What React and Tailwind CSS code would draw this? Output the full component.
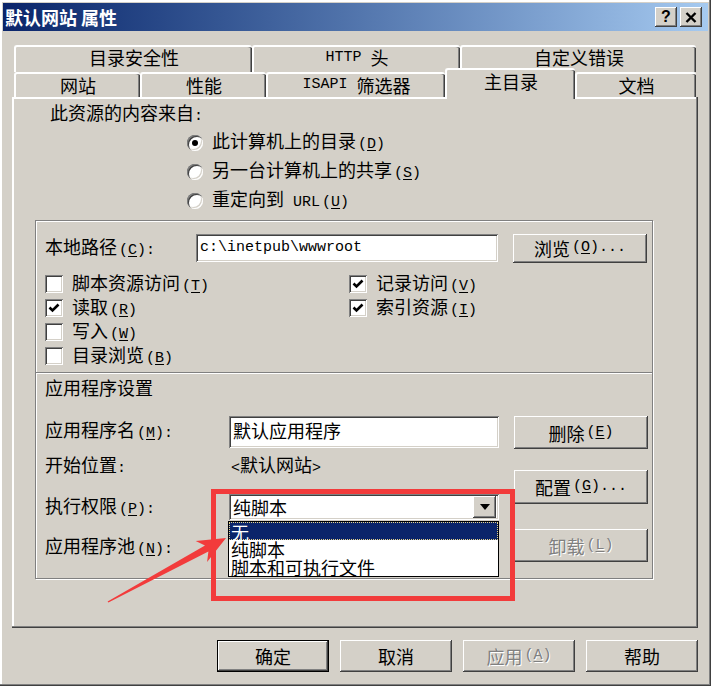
import React from 'react';

const raised = 'shadow-[inset_-1px_-1px_#404040,inset_1px_1px_#ffffff,inset_-2px_-2px_#808080,inset_2px_2px_#d4d0c8]';
const sunken = 'shadow-[inset_1px_1px_#808080,inset_-1px_-1px_#ffffff,inset_2px_2px_#404040,inset_-2px_-2px_#d4d0c8]';

const Mono = ({ children }) => (
    <span className="font-['Liberation_Mono',monospace] text-[15px]">{children}</span>
);

// mnemonic like (D), underlined letter
const Key = ({ k, after = '' }) => (
    <span className="ml-[2px] font-['Liberation_Mono',monospace] text-[15px]">
        (<span className="underline underline-offset-2">{k}</span>){after}
    </span>
);

const Button = ({ children, className = '', disabled = false, isDefault = false }) => (
    <div className={`bg-[#d4d0c8] ${isDefault ? 'border border-black' : ''} ${className}`}>
        <div className={`flex h-full w-full items-center justify-center ${raised} ${disabled ? 'text-[#808080] [text-shadow:1px_1px_#ffffff]' : ''}`}>
            {children}
        </div>
    </div>
);

const Check = ({ checked, children }) => (
    <div className="flex h-[24px] items-center">
        <div className={`h-[18px] w-[18px] bg-white ${sunken}`}>
            {checked && (
                <svg width="18" height="18" viewBox="0 0 18 18">
                    <path d="M4.5 8.5 L7.5 11.5 L13.5 5.5" fill="none" stroke="#000" strokeWidth="2.6" />
                </svg>
            )}
        </div>
        <span className="ml-[9px]">{children}</span>
    </div>
);

const Radio = ({ checked, children }) => (
    <div className="flex h-[29px] items-center">
        <div className="flex h-[16px] w-[16px] items-center justify-center rounded-full bg-white shadow-[inset_1px_1px_#808080,inset_2px_2px_#404040,inset_-1px_-1px_#ffffff,inset_-2px_-2px_#d4d0c8]">
            {checked && <div className="h-[6px] w-[6px] rounded-full bg-black" />}
        </div>
        <span className="ml-[9px]">{children}</span>
    </div>
);

const Tab = ({ children, className = '' }) => (
    <div className={`flex justify-center rounded-t-[3px] border-l-2 border-t-2 border-white bg-[#d4d0c8] shadow-[inset_-1px_0_#404040,inset_-2px_0_#808080] ${className}`}>
        {children}
    </div>
);

export default function App() {
    return (
        <div className="relative h-[686px] w-[711px] overflow-hidden bg-[#d4d0c8] p-[3px] font-['Noto_Sans_CJK_SC',sans-serif] text-[18px] leading-[22px] text-black shadow-[inset_-1px_-1px_#404040,inset_-2px_-2px_#808080,inset_2px_2px_#ffffff]">
            {/* title bar */}
            <div className="flex h-[28px] items-center bg-linear-to-r from-[#0a246a] to-[#a6caf0] pl-[2px] pr-[6px]">
                <span className="flex-1 text-[18px] font-bold text-white">默认网站 属性</span>
                <div className="flex gap-[3px]">
                    <div className={`flex h-[20px] w-[22px] items-center justify-center bg-[#d4d0c8] font-['Liberation_Sans',sans-serif] text-[16px] font-bold ${raised}`}>?</div>
                    <div className={`flex h-[20px] w-[22px] items-center justify-center bg-[#d4d0c8] ${raised}`}>
                        <svg width="12" height="11" viewBox="0 0 12 11">
                            <path d="M1.5 1 L10.5 10 M10.5 1 L1.5 10" stroke="#000" strokeWidth="2.4" />
                        </svg>
                    </div>
                </div>
            </div>

            <div className="pl-[9px] pr-[10px] pt-[14px]">
                {/* back row of tabs */}
                <div className="ml-[2px] flex h-[27px]">
                    <Tab className="w-[238px] leading-[21px]">目录安全性</Tab>
                    <Tab className="w-[208px] leading-[21px]"><Mono>HTTP&nbsp;</Mono>头</Tab>
                    <Tab className="w-[236px] leading-[21px]">自定义错误</Tab>
                </div>
                {/* front row of tabs */}
                <div className="ml-[2px] flex h-[25px] items-end">
                    <Tab className="h-[25px] w-[126px]">网站</Tab>
                    <Tab className="h-[25px] w-[126px]">性能</Tab>
                    <Tab className="h-[25px] w-[179px]"><Mono>ISAPI&nbsp;</Mono>筛选器</Tab>
                    <Tab className="relative z-10 -mb-[2px] h-[31px] w-[130px]">主目录</Tab>
                    <Tab className="h-[25px] w-[121px]">文档</Tab>
                </div>

                {/* tab page */}
                <div className="h-[531px] pt-[4px] shadow-[inset_-1px_-1px_#404040,inset_-2px_-2px_#808080,inset_2px_2px_#ffffff]">
                    <div className="ml-[38px] h-[23px]">此资源的内容来自<Mono>:</Mono></div>
                    <div className="ml-[175px] mt-[4px]">
                        <Radio checked>此计算机上的目录<Key k="D" /></Radio>
                        <Radio>另一台计算机上的共享<Key k="S" /></Radio>
                        <Radio>重定向到<Mono>&nbsp;URL</Mono><Key k="U" /></Radio>
                    </div>

                    {/* etched frame */}
                    <div className="ml-[23px] mt-[5px] w-[618px] border border-[#808080] shadow-[inset_1px_1px_#ffffff,1px_1px_#ffffff]">
                        <div className="mt-[13px] flex h-[28px] items-center pl-[9px]">
                            <span className="w-[151px]">本地路径<Key k="C" after=":" /></span>
                            <div className={`flex h-[28px] w-[302px] items-center bg-white pl-[4px] ${sunken}`}>
                                <Mono>{'c:\\inetpub\\wwwroot'}</Mono>
                            </div>
                            <Button className="ml-[15px] h-[29px] w-[134px]">浏览<Key k="O" after="..." /></Button>
                        </div>

                        <div className="mt-[10px] grid grid-cols-[304px_1fr] pl-[9px]">
                            <div>
                                <Check>脚本资源访问<Key k="T" /></Check>
                                <Check checked>读取<Key k="R" /></Check>
                                <Check>写入<Key k="W" /></Check>
                                <Check>目录浏览<Key k="B" /></Check>
                            </div>
                            <div>
                                <Check checked>记录访问<Key k="V" /></Check>
                                <Check checked>索引资源<Key k="I" /></Check>
                            </div>
                        </div>

                        <div className="mt-[4px] h-[2px] border-b border-t border-b-white border-t-[#808080]" />
                        <div className="mt-[2px] pl-[9px]">应用程序设置</div>

                        <div className="mt-[17px] flex pb-[13px] pl-[9px]">
                            <div className="w-[454px]">
                                <div className="flex h-[33px] items-center">
                                    <span className="w-[184px]">应用程序名<Key k="M" after=":" /></span>
                                    <div className={`h-[32px] w-[270px] bg-white pl-[4px] pt-[3px] ${sunken}`}>默认应用程序</div>
                                </div>
                                <div className="flex h-[37px] items-center">
                                    <span className="w-[184px]">开始位置<Mono>:</Mono></span>
                                    <span className="pl-[2px]"><Mono>&lt;</Mono>默认网站<Mono>&gt;</Mono></span>
                                </div>
                                <div className="flex h-[44px] items-center">
                                    <span className="w-[184px]">执行权限<Key k="P" after=":" /></span>
                                    <div className={`relative flex h-[26px] w-[270px] items-center bg-white p-[2px] pr-[3px] ${sunken}`}>
                                        <span className="flex-1 pl-[2px]">纯脚本</span>
                                        <div className={`flex h-[22px] w-[23px] items-center justify-center bg-[#d4d0c8] ${raised}`}>
                                            <svg width="10" height="6" viewBox="0 0 10 6">
                                                <path d="M0 0 H10 L5 6 Z" fill="#000" />
                                            </svg>
                                        </div>
                                        {/* open drop-down list */}
                                        <div className="absolute left-[-1px] top-full z-20 mt-[1px] h-[56px] w-[271px] border border-black bg-white text-[18px] leading-[18px]">
                                            <div className="h-[18px] border border-dotted border-[#e6d48a] bg-[#0a246a] pl-[1px] text-white">无</div>
                                            <div className="h-[18px] pl-[2px]">纯脚本</div>
                                            <div className="h-[18px] pl-[2px]">脚本和可执行文件</div>
                                        </div>
                                    </div>
                                </div>
                                <div className="flex h-[36px] items-center">
                                    <span className="w-[184px]">应用程序池<Key k="N" after=":" /></span>
                                </div>
                            </div>
                            <div className="ml-[15px] w-[134px]">
                                <Button className="mt-[1px] h-[33px] w-[134px]">删除<Key k="E" /></Button>
                                <Button className="mt-[21px] h-[34px] w-[134px]">配置<Key k="G" after="..." /></Button>
                                <Button disabled className="mt-[25px] h-[33px] w-[134px]">卸载<Key k="L" /></Button>
                            </div>
                        </div>
                    </div>
                </div>

                {/* dialog buttons */}
                <div className="mt-[12px] flex justify-end gap-[11px]">
                    <Button isDefault className="h-[32px] w-[112px]">确定</Button>
                    <Button className="h-[32px] w-[112px]">取消</Button>
                    <Button disabled className="h-[32px] w-[112px]">应用<Key k="A" /></Button>
                    <Button className="h-[32px] w-[112px]">帮助</Button>
                </div>
            </div>

            {/* red annotation */}
            <svg className="pointer-events-none absolute left-0 top-0 z-30" width="711" height="686" viewBox="0 0 711 686">
                <rect x="213.5" y="491.5" width="299" height="107" fill="none" stroke="#f23b3b" strokeWidth="5" />
                <polygon
                    points="107.6,601.4 205,545.4 195.7,540.9 226,538 207.1,561.9 208.4,551.6 108.4,602.6"
                    fill="#f23b3b"
                />
            </svg>
        </div>
    );
}
